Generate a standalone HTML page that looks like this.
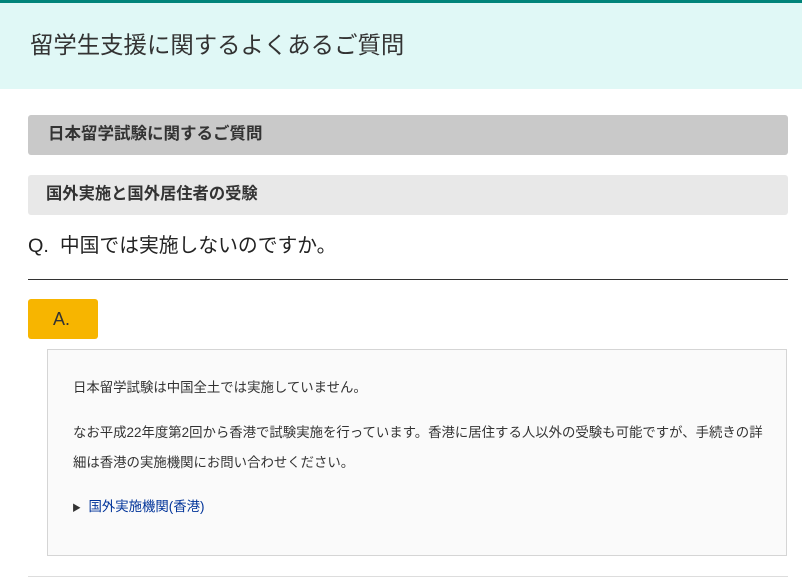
<!DOCTYPE html>
<html><head><meta charset="utf-8"><style>
body{margin:0;width:802px;height:586px;overflow:hidden;background:#fff;font-family:"Liberation Sans","Noto Sans CJK JP",sans-serif;color:#333;position:relative}
.a{position:absolute;white-space:nowrap}
</style></head><body>
<div class="a" style="left:0;top:0;width:802px;height:3px;background:#00847a"></div>
<div class="a" style="left:0;top:3px;width:802px;height:86px;background:#e0f8f6"></div>
<div class="a" style="left:30px;top:30px;font-size:23.4px;line-height:30px;color:#333">留学生支援に関するよくあるご質問</div>
<div class="a" style="left:28px;top:115px;width:760px;height:40px;background:#c9c9c9;border-radius:3px"></div>
<div class="a" style="left:48px;top:123px;font-size:16.5px;line-height:22px;font-weight:bold;color:#333">日本留学試験に関するご質問</div>
<div class="a" style="left:28px;top:175px;width:760px;height:40px;background:#e8e8e8;border-radius:3px"></div>
<div class="a" style="left:46px;top:183px;font-size:16.3px;line-height:22px;font-weight:bold;color:#333">国外実施と国外居住者の受験</div>
<div class="a" style="left:28px;top:233px;font-size:19.8px;line-height:26px;color:#222">Q.&nbsp; 中国では実施しないのですか。</div>
<div class="a" style="left:28px;top:279px;width:760px;height:1px;background:#333"></div>
<div class="a" style="left:28px;top:299px;width:70px;height:40px;background:#f7b500;border-radius:3px"></div>
<div class="a" style="left:53px;top:307px;font-size:18px;line-height:24px;color:#333">A.</div>
<div class="a" style="left:47px;top:349px;width:738px;height:205px;background:#fafafa;border:1px solid #d5d5d5"></div>
<div class="a" style="left:73px;top:378px;font-size:13.4px;line-height:20px">日本留学試験は中国全土では実施していません。</div>
<div class="a" style="left:73px;top:418px;font-size:13.4px;line-height:30px;white-space:normal;width:702px">なお平成22年度第2回から香港で試験実施を行っています。香港に居住する人以外の受験も可能ですが、手続きの詳細は香港の実施機関にお問い合わせください。</div>
<div class="a" style="left:72px;top:497px;font-size:13.4px;line-height:20px;color:#003399"><span style="font-size:9px;color:#333">▶</span>&nbsp; 国外実施機関(香港)</div>
<div class="a" style="left:28px;top:576px;width:760px;height:1px;background:#ddd"></div>
</body></html>
